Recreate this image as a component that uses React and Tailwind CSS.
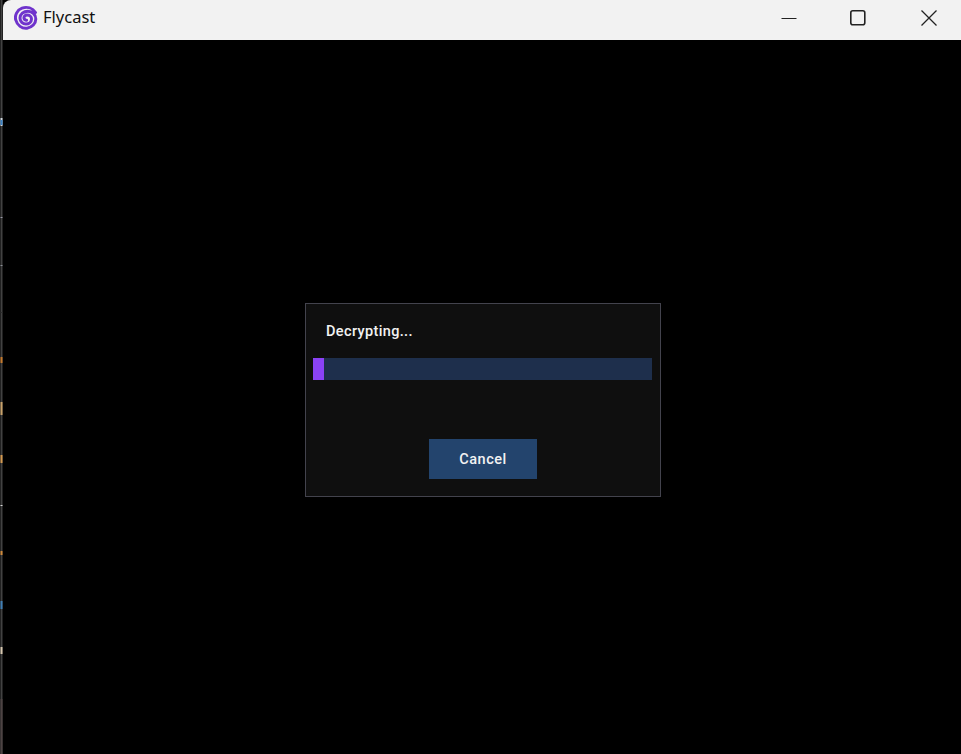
import React from 'react';

// sliver of the window behind, showing down the left edge
const marks = [
  [118, 8, '#cfd8e0'], [120, 5, '#3b82c4'], [217, 1, '#9a9aa8'], [265, 1, '#8a8f96'],
  [357, 6, '#c77a2c'], [402, 13, '#c9a26a'], [455, 8, '#d59a50'], [505, 1, '#d8d8d8'],
  [551, 4, '#d08a3a'], [601, 8, '#3f7fb5'], [647, 7, '#d8c8b0'],
];

const EdgeStrip = () => (
  <svg width="3" height="754" className="block shrink-0">
    <rect width="3" height="754" fill="#000" />
    <rect x="0.5" width="2" height="754" fill="#424242" />
    <rect x="0.5" y="699" width="2" height="55" fill="#4d4343" />
    <rect x="0.5" y="312" width="2" height="1" fill="#2c2c2c" />
    {marks.map(([y, h, color]) => (
      <rect key={y} x="0.5" y={y} width="2" height={h} fill={color} />
    ))}
  </svg>
);

const SpiralLogo = () => (
  <svg width="24" height="24" viewBox="0 0 24 24" fill="none" className="shrink-0">
    <path
      d="M21.5 6.5C18.5 2 13 0.5 8 2.2C3 4 0.5 9.5 1.8 14C3.2 19.5 8 22.8 13 22.2C18 21.5 21.8 17.5 21.8 13C21.8 8.5 18 5.2 14 5.2C9.5 5.2 6 8 6 12C6 15.5 8.8 18 12 18C15 18 17.5 15.8 17.5 13C17.5 10.5 15.5 9 13 9C11 9 9.8 10.5 10 12.3C10.2 13.6 11.4 14.4 12.6 14.2"
      stroke="#6f33cc"
      strokeWidth="3"
      strokeLinecap="round"
    />
  </svg>
);

const App = () => {
  return (
    <div className="flex w-[961px] h-[754px] overflow-hidden bg-black">
      <EdgeStrip />
      <div className="flex flex-col flex-1">
        <div className="flex items-center justify-between h-10 bg-[#f2f2f2] rounded-tl-lg shrink-0">
          <div className="flex items-center ml-[11px] gap-[5px] -mt-[5px]">
            <SpiralLogo />
            <span className="font-['Noto_Sans',sans-serif] text-[16.5px] text-[#111]">Flycast</span>
          </div>
          <div className="flex items-center text-[#222] -mt-[5px]">
            <svg width="16" height="16" viewBox="0 0 16 16" fill="none" stroke="currentColor" className="mr-[53px]">
              <path d="M0.5 8.5H15.5" />
            </svg>
            <svg width="16" height="16" viewBox="0 0 16 16" fill="none" stroke="currentColor" strokeWidth="1.6" className="mr-[55px]">
              <rect x="0.8" y="0.8" width="14" height="14" rx="2" />
            </svg>
            <svg width="16" height="16" viewBox="0 0 16 16" fill="none" stroke="currentColor" strokeWidth="1.3" className="mr-[24px]">
              <path d="M0.5 0.5L15.5 15.5M15.5 0.5L0.5 15.5" />
            </svg>
          </div>
        </div>
        <div className="flex-1 flex justify-center pt-[263px] pl-[2px]">
          <div className="flex flex-col w-[356px] h-[194px] bg-[#0f0f0f] border border-[#43434d] font-['Roboto',sans-serif]">
            <div className="mt-[18px] ml-5 text-[14.5px] tracking-[0.36px] leading-5 font-medium text-[#f2f2f2]">Decrypting...</div>
            <div className="mt-[16px] mx-[7px] w-[339px] h-[22px] bg-[#1e2f4c]">
              <div className="w-[11px] h-full bg-[#8a42f5]" />
            </div>
            <button className="self-center mt-[59px] pt-[1px] w-[108px] h-10 bg-[#23446d] text-[14.5px] tracking-[0.5px] font-medium text-[#f2f2f2]">
              Cancel
            </button>
          </div>
        </div>
      </div>
    </div>
  );
};

export default App;
